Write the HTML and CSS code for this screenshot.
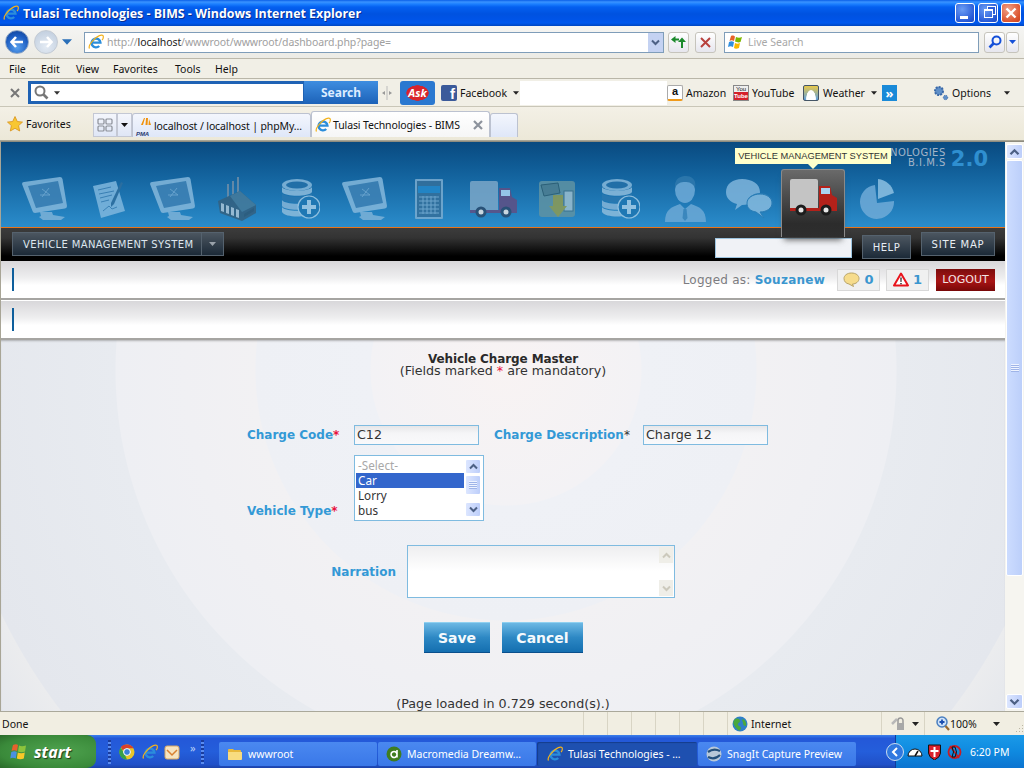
FILE: index.html
```html
<!DOCTYPE html>
<html lang="en">
<head>
  <meta charset="UTF-8" />
  <title>Tulasi Technologies - BIMS - Windows Internet Explorer</title>
  <link rel="stylesheet" href="styles.css">
</head>
<body>
  <svg class="sprite" width="0" height="0">
    <symbol id="ie" viewBox="0 0 16 16">
      <path d="M3.6 8.6h8.8a4.4 4.4 0 1 0-1.2 3.4" fill="none" stroke="#2b8ddb" stroke-width="2.4"/>
      <path d="M1.5 14.5C-.5 11 8 2 13.5 1.2c2.4-.3 2.3 2.6.6 5" fill="none" stroke="#f3b21c" stroke-width="1.2"/>
    </symbol>
    <symbol id="chev-up" viewBox="0 0 9 7"><path d="M1 5.5 4.5 2 8 5.5" fill="none" stroke="currentColor" stroke-width="2"/></symbol>
    <symbol id="chev-down" viewBox="0 0 9 7"><path d="M1 1.5 4.5 5 8 1.5" fill="none" stroke="currentColor" stroke-width="2"/></symbol>
    <symbol id="caret" viewBox="0 0 7 4"><path d="M0 0h7L3.5 4z" fill="currentColor"/></symbol>
    <symbol id="monitor" viewBox="0 0 46 44">
      <path d="M18 35h12l1 3 12 2-4 3H21l-4-3 2-1z" fill="#7db2d8"/>
      <path d="M2 5 38 0q2 0 2.500 2L45 29q0 2-2 2.500L13 36q-2 0-2.500-2L0 7q0-2 2-2z" fill="#85b8dc"/>
      <path d="M6 9 36 4l5 22-27 5z" fill="#3f82b5"/>
      <path d="M20 12l8 6M27 11l-7 9M18 18h10" stroke="#7db2d8" stroke-width=".8" fill="none"/>
    </symbol>
    <symbol id="note" viewBox="0 0 32 37">
      <path d="M0 5 23 0l9 30-24 7z" fill="#7fb7de"/>
      <path d="M5 9l13-3M6 13l15-3M7 17l12-3M8 21l8-2M10 30l6-5 3 3 5-2" stroke="#3f82b5" stroke-width="1" fill="none"/>
      <path d="M28 1l2 1-9 21-3 3 0-4z" fill="#2f6f9f"/>
    </symbol>
    <symbol id="factory" viewBox="0 0 38 44">
      <path d="M9 20V7h2v13zM14 18V4h2v14zM19 16V0h2v16z" fill="#6f8ea8"/>
      <path d="M0 24 22 14l16 14v8L24 44 2 36z" fill="#34607f"/>
      <path d="M12 19 22 14l16 14-14 7z" fill="#457a9a"/>
      <path d="M3 26v8l3 1v-8zM8 28v8l3 1v-8zM13 30v8l3 1v-8zM18 32v8l3 1v-8z" fill="#a9c3d6"/>
      <path d="M26 37l10-6v3l-10 6z" fill="#2e5876"/>
    </symbol>
    <symbol id="db" viewBox="0 0 38 40">
      <ellipse cx="15" cy="6" rx="15" ry="6" fill="#86b8db"/>
      <ellipse cx="15" cy="6" rx="11" ry="3.500" fill="#2470a8"/>
      <path d="M0 8c3 5 27 5 30 0v5c-3 5-27 5-30 0z" fill="#8dbcdc"/>
      <path d="M0 14c3 5 27 5 30 0v6c-3 5-27 5-30 0z" fill="#2a78b0"/>
      <path d="M0 21c3 5 27 5 30 0v6c-3 5-27 5-30 0z" fill="#84b5d8"/>
      <path d="M0 28c3 5 27 5 30 0v5c-3 6-27 6-30 0z" fill="#8dbcdc"/>
      <circle cx="27" cy="28" r="11" fill="#1f77b3" stroke="#a2cbe6" stroke-width="1.200"/>
      <path d="M25 21h4v5h5v4h-5v5h-4v-5h-5v-4h5z" fill="#a5cde8"/>
    </symbol>
    <symbol id="calc" viewBox="0 0 28 40">
      <rect width="28" height="40" rx="1" fill="#7aacd0"/>
      <rect x="2" y="2" width="24" height="36" fill="#35709b"/>
      <rect x="3" y="7" width="22" height="7" fill="#2488c9"/>
      <path d="M4 18h20M4 22h20M4 26h20M4 30h20M4 34h20M8 17v18M12 17v18M16 17v18M20 17v18" stroke="#7aacd0" stroke-width="1" fill="none"/>
    </symbol>
    <symbol id="truck" viewBox="0 0 47 37">
      <rect y="0" width="28" height="31" rx="2" fill="currentColor"/>
      <path d="M29 7h11l2 9 5 3v10H29z" fill="var(--cab)"/>
      <rect x="31" y="9" width="9" height="6" fill="#a9d4f2"/>
      <path d="M0 29h47v3H0z" fill="var(--cab)"/>
      <circle cx="11" cy="31" r="5.500" fill="var(--tyre)"/><circle cx="11" cy="31" r="2.500" fill="#e6e6e6"/>
      <circle cx="36" cy="31" r="5.500" fill="var(--tyre)"/><circle cx="36" cy="31" r="2.500" fill="#e6e6e6"/>
    </symbol>
    <symbol id="box" viewBox="0 0 36 37">
      <rect width="36" height="36" rx="3" fill="#5f93a3"/>
      <path d="M2 4 19 2l2 10-16 3z" fill="#4f7f90" stroke="#2e5e70"/>
      <rect x="25" y="10" width="9" height="20" fill="#9cbfd0" stroke="#3f7088"/>
      <path d="M14 14h10v11h4l-9 11-9-11h4z" fill="#8f9c54"/>
    </symbol>
    <symbol id="person" viewBox="0 0 41 46">
      <path d="M0 46c0-12 6-15 15-18l5 5 6-5c9 3 15 6 15 18z" fill="#6ca9d6"/>
      <ellipse cx="20" cy="14" rx="10" ry="13" fill="#6fabd8"/>
      <path d="M10 12C9 2 16 0 21 0s11 3 9 12c-2-5-6-6-10-6s-8 1-10 6z" fill="#2f79ae"/>
      <path d="M18.500 33h3l1 9-2.500 3-2.500-3z" fill="#3f88bd"/>
    </symbol>
    <symbol id="chat" viewBox="0 0 47 40">
      <path d="M16 0c10 0 18 5 18 13 0 7-9 13-18 13l-7 5 2-6C4 23 0 19 0 13 0 5 7 0 16 0z" fill="#7fb5dc"/>
      <ellipse cx="34" cy="24" rx="13" ry="10" fill="#2a7db6"/>
      <path d="M34 15c7 0 12 4 12 9s-5 9-12 9l4 6-8-6c-6-1-9-4-9-9s6-9 13-9z" fill="#86bbdf" stroke="#2a7db6"/>
    </symbol>
    <symbol id="pie" viewBox="0 0 38 41">
      <path d="M17 6A17 17 0 1 0 36 22L19 24z" fill="#6fabd8"/>
      <path d="M20 0c8 1 14 6 16 14L20 20z" fill="#8cc0e2"/>
    </symbol>
    <symbol id="shield-alert" viewBox="0 0 16 15">
      <path d="M8 1.500 15 13.500H1z" fill="#fff" stroke="#e8141c" stroke-width="2" stroke-linejoin="round"/>
      <path d="M7.300 5.500h1.400l-.2 4.500h-1zM7.300 11h1.400v1.300H7.300z" fill="#222"/>
    </symbol>
  </svg>

  <div class="window">
    <header class="titlebar">
      <svg class="icon-16 title-ie"><use href="#ie"/></svg>
      <span class="title-text">Tulasi Technologies - BIMS - Windows Internet Explorer</span>
      <div class="win-btns">
        <span class="win-btn"><i class="glyph-min"></i></span>
        <span class="win-btn"><i class="glyph-max"></i></span>
        <span class="win-btn win-close">
          <svg width="12" height="12" viewBox="0 0 12 12"><path d="M1.500 1.500l9 9M10.500 1.500l-9 9" stroke="#fff" stroke-width="2.400"/></svg>
        </span>
      </div>
    </header>

    <div class="addressbar">
      <div class="nav-pill">
        <span class="nav-round nav-back">
          <svg width="14" height="12" viewBox="0 0 14 12"><path d="M6 1 1.500 6 6 11M2 6h11" fill="none" stroke="#fff" stroke-width="2.600"/></svg>
        </span>
        <span class="nav-round nav-fwd">
          <svg width="14" height="12" viewBox="0 0 14 12"><path d="M8 1l4.500 5L8 11M12 6H1" fill="none" stroke="#fff" stroke-width="2.600"/></svg>
        </span>
        <svg class="nav-caret" width="10" height="6"><use href="#caret"/></svg>
      </div>
      <div class="addr-box">
        <svg class="icon-16"><use href="#ie"/></svg>
        <span class="addr-url">http://<b>localhost</b>/wwwroot/wwwroot/dashboard.php?page=</span>
        <span class="addr-drop"><svg width="9" height="7"><use href="#chev-down"/></svg></span>
      </div>
      <span class="small-btn btn-refresh">
        <svg width="15" height="14" viewBox="0 0 15 14"><path d="M8 4.500H3M11 13V6" stroke="#1c8a2c" stroke-width="2" fill="none"/><path d="M4.500 1 0 4.500 4.500 8zM7 7l4-4.500L15 7z" fill="#1c8a2c"/></svg>
      </span>
      <span class="small-btn btn-stop">
        <svg width="11" height="11" viewBox="0 0 11 11"><path d="M1 1l9 9M10 1l-9 9" stroke="#b8413d" stroke-width="2"/></svg>
      </span>
      <div class="live-box">
        <svg width="16" height="15" viewBox="0 0 16 15">
          <path d="M3 1c2-1 3 0 4 .500L6 6C4 5 3 5 1.500 6z" fill="#e8622a"/>
          <path d="M8 2c2 1 4 1 6 0l-1.500 5c-2 1-4 0-5.500-.500z" fill="#7fb800"/>
          <path d="M1 7c2-1 3-1 5 0l-1 5c-2-1-3-1-5 0z" fill="#2f8fe0"/>
          <path d="M7 8c2 1 3 1 5 0l-1 5c-2 1-4 1-5 0z" fill="#f8b800"/>
        </svg>
        <span>Live Search</span>
      </div>
      <span class="small-btn btn-go">
        <svg width="14" height="14" viewBox="0 0 14 14"><circle cx="8.500" cy="5.500" r="4" fill="none" stroke="#1550d8" stroke-width="2"/><path d="M5.500 8.500 1.500 12.500" stroke="#1550d8" stroke-width="2.600"/></svg>
      </span>
      <span class="small-btn btn-godrop"><svg width="7" height="4"><use href="#caret"/></svg></span>
    </div>

    <nav class="menubar">
      <span>File</span><span>Edit</span><span>View</span><span>Favorites</span><span>Tools</span><span>Help</span>
    </nav>

    <div class="toolbar">
      <span class="tb-cell tb-close">
        <svg width="10" height="10" viewBox="0 0 10 10"><path d="M1 1l8 8M9 1 1 9" stroke="#777" stroke-width="2"/></svg>
      </span>
      <div class="ask-box">
        <svg width="15" height="15" viewBox="0 0 15 15"><circle cx="6" cy="6" r="4.500" fill="none" stroke="#777" stroke-width="2"/><path d="M9.500 9.500l4 4" stroke="#777" stroke-width="2.600"/></svg>
        <svg class="ask-caret" width="6" height="4"><use href="#caret"/></svg>
      </div>
      <span class="ask-search">Search</span>
      <span class="tb-cell tb-grip">
        <svg width="10" height="14" viewBox="0 0 10 14"><path d="M5 0v14" stroke="#bbb"/><path d="M3 5v4L0 7zM7 5v4l3-2z" fill="#999"/></svg>
      </span>
      <span class="tb-cell"><span class="ask-logo">Ask</span></span>
      <span class="tb-cell tb-link"><i class="fb-icon">f</i>Facebook<svg class="tb-caret" width="6" height="4"><use href="#caret"/></svg></span>
      <span class="tb-white"></span>
      <span class="tb-cell tb-link"><i class="amazon-icon">a</i>Amazon</span>
      <span class="tb-cell tb-link"><i class="yt-icon">You<b>Tube</b></i>YouTube</span>
      <span class="tb-cell tb-link"><i class="weather-icon"></i>Weather<svg class="tb-caret" width="6" height="4"><use href="#caret"/></svg></span>
      <span class="tb-cell"><i class="more-icon">»</i></span>
      <span class="tb-cell tb-link">
        <svg width="16" height="16" viewBox="0 0 16 16"><circle cx="6" cy="6" r="4" fill="#5f8fc8" stroke="#3a69a8" stroke-width="2" stroke-dasharray="2 1"/><circle cx="12.500" cy="12.500" r="2.200" fill="#5f8fc8" stroke="#3a69a8" stroke-dasharray="1 1"/></svg>
        Options<svg class="options-caret" width="6" height="4"><use href="#caret"/></svg>
      </span>
    </div>

    <div class="tabbar">
      <span class="fav">
        <svg width="16" height="16" viewBox="0 0 16 16"><path d="M8 .500l2.300 5 5.200.600-3.900 3.500 1.100 5.400L8 12.300 3.300 15l1.100-5.400L.500 6.100l5.200-.600z" fill="#f8c732" stroke="#d8921a" stroke-width=".8"/></svg>
        Favorites
      </span>
      <span class="tab-tool tab-grid">
        <svg width="16" height="14" viewBox="0 0 16 14"><g fill="none" stroke="#8b8f98" stroke-width="1.200"><rect x="1" y="1" width="6" height="5" rx="1"/><rect x="9" y="1" width="6" height="5" rx="1"/><rect x="1" y="8" width="6" height="5" rx="1"/><rect x="9" y="8" width="6" height="5" rx="1"/></g></svg>
      </span>
      <span class="tab-tool tab-arrow"><svg width="7" height="4"><use href="#caret"/></svg></span>
      <span class="tab tab-pma">
        <svg width="16" height="16" viewBox="0 0 16 16"><path d="M7 0 4 7h2l2-7zM9 0l-.5 7h2L11 0zM12 1l-.5 6h2.500z" fill="#f0920c"/></svg>
        <span class="pma">PMA</span>
        localhost / localhost | phpMy…
      </span>
      <span class="tab tab-on">
        <svg class="icon-16"><use href="#ie"/></svg>
        Tulasi Technologies - BIMS
        <svg class="tab-x" width="10" height="10" viewBox="0 0 10 10"><path d="M1 1l8 8M9 1 1 9" stroke="#8c929c" stroke-width="2.200"/></svg>
      </span>
      <span class="tab tab-new"></span>
    </div>

    <div class="viewport">
      <div class="page">
        <div class="head">
          <div class="nav-icons">
            <span class="nav-cell"><svg class="i-monitor"><use href="#monitor"/></svg></span>
            <span class="nav-cell"><svg class="i-note"><use href="#note"/></svg></span>
            <span class="nav-cell"><svg class="i-monitor"><use href="#monitor"/></svg></span>
            <span class="nav-cell"><svg class="i-factory"><use href="#factory"/></svg></span>
            <span class="nav-cell"><svg class="i-db"><use href="#db"/></svg></span>
            <span class="nav-cell"><svg class="i-monitor"><use href="#monitor"/></svg></span>
            <span class="nav-cell"><svg class="i-calc"><use href="#calc"/></svg></span>
            <span class="nav-cell"><svg class="i-truck truck-dim"><use href="#truck"/></svg></span>
            <span class="nav-cell"><svg class="i-box"><use href="#box"/></svg></span>
            <span class="nav-cell"><svg class="i-db"><use href="#db"/></svg></span>
            <span class="nav-cell"><svg class="i-person"><use href="#person"/></svg></span>
            <span class="nav-cell"><svg class="i-chat"><use href="#chat"/></svg></span>
            <span class="nav-cell nav-active"><svg class="i-truck truck-on"><use href="#truck"/></svg></span>
            <span class="nav-cell"><svg class="i-pie"><use href="#pie"/></svg></span>
          </div>
          <div class="brand">
            <div class="brand-text">NOLOGIES<br>B.I.M.S</div>
            <div class="brand-ver">2.0</div>
          </div>
          <div class="tooltip">VEHICLE MANAGEMENT SYSTEM</div>
        </div>

        <div class="darkbar">
          <div class="module-select">
            <span class="module-name">VEHICLE MANAGEMENT SYSTEM</span>
            <span class="module-arrow"><svg width="7" height="4"><use href="#caret"/></svg></span>
          </div>
          <input class="quick-search" type="text">
          <span class="dark-btn dark-help">HELP</span>
          <span class="dark-btn dark-map">SITE MAP</span>
        </div>

        <div class="strip strip-user">
          <i class="strip-mark"></i>
          <div class="user-info">
            <span class="logged">Logged as: <b>Souzanew</b></span>
            <span class="count-box count-msg">
              <svg width="17" height="15" viewBox="0 0 17 15"><path d="M8.500 1C13 1 16 3.500 16 6.500S13 12 9.500 12l1 2.500L6 12C3 11.500 1 9.500 1 6.500S4 1 8.500 1z" fill="#f6dc8c" stroke="#b8a468"/></svg>
              0
            </span>
            <span class="count-box count-alert"><svg width="16" height="15"><use href="#shield-alert"/></svg>1</span>
            <span class="logout">LOGOUT</span>
          </div>
        </div>
        <div class="strip"><i class="strip-mark"></i></div>

        <main class="main">
          <h1 class="form-title">Vehicle Charge Master</h1>
          <p class="form-note">(Fields marked <span class="req">*</span> are mandatory)</p>

          <form class="form">
            <div class="row row-code">
              <label class="lbl lbl-code">Charge Code<span class="req">*</span></label>
              <input class="field" type="text" value="C12">
              <label class="lbl lbl-desc">Charge Description<span class="req">*</span></label>
              <input class="field" type="text" value="Charge 12">
            </div>
            <div class="row row-type">
              <label class="lbl lbl-code">Vehicle Type<span class="req">*</span></label>
              <div class="listbox">
                <ul class="list-items">
                  <li class="opt-muted">-Select-</li>
                  <li class="opt-on">Car</li>
                  <li>Lorry</li>
                  <li>bus</li>
                </ul>
                <div class="list-scroll">
                  <span class="sb-btn"><svg width="9" height="7"><use href="#chev-up"/></svg></span>
                  <span class="sb-btn list-thumb"><i class="sb-grip"></i></span>
                  <span class="sb-fill"></span>
                  <span class="sb-btn"><svg width="9" height="7"><use href="#chev-down"/></svg></span>
                </div>
              </div>
            </div>
            <div class="row row-narr">
              <label class="lbl lbl-narr">Narration</label>
              <div class="narr">
                <textarea class="narr-text"></textarea>
                <div class="narr-scroll">
                  <span class="sb-off"><svg width="9" height="7"><use href="#chev-up"/></svg></span>
                  <span class="sb-off"><svg width="9" height="7"><use href="#chev-down"/></svg></span>
                </div>
              </div>
            </div>
            <div class="row row-btns">
              <button class="btn btn-save" type="button">Save</button>
              <button class="btn btn-cancel" type="button">Cancel</button>
            </div>
          </form>
          <p class="loaded">(Page loaded in 0.729 second(s).)</p>
        </main>
      </div>

      <div class="page-scroll">
        <span class="ps-btn"><svg width="11" height="8"><use href="#chev-up"/></svg></span>
        <span class="ps-thumb"><i class="sb-grip"></i></span>
        <span class="ps-track"></span>
        <span class="ps-btn"><svg width="11" height="8"><use href="#chev-down"/></svg></span>
      </div>
    </div>

    <footer class="statusbar">
      <span class="st-done">Done</span>
      <span class="st-sep"></span><span class="st-sep"></span><span class="st-sep"></span><span class="st-sep"></span><span class="st-sep"></span><span class="st-sep"></span>
      <span class="st-zone">
        <svg width="16" height="16" viewBox="0 0 16 16"><circle cx="8" cy="8" r="7.500" fill="#2f7fc8"/><path d="M3 3c3-1 5 0 5 2S5 7 6 9s3 1 3 3-2 3-3 2-3-3-4-5-1-4 1-6zM11 3c2 1 4 4 3 7-2 0-3-1-3-3s-2-3 0-4z" fill="#4aa83c"/></svg>
        Internet
      </span>
      <span class="st-lock">
        <svg width="16" height="15" viewBox="0 0 16 15"><path d="M2 8l5-5" stroke="#b8b8b8" stroke-width="2.500"/><path d="M8 7V4.500a2.500 2.500 0 0 1 5 0V7" fill="none" stroke="#999" stroke-width="1.500"/><rect x="7" y="7" width="7" height="7" fill="#a8a8a8"/></svg>
        <svg class="st-caret" width="7" height="4"><use href="#caret"/></svg>
      </span>
      <span class="st-zoom">
        <svg width="14" height="15" viewBox="0 0 14 15"><circle cx="6" cy="6" r="5" fill="#cfe2f8" stroke="#4a7fc0" stroke-width="1.500"/><path d="M3.500 6h5M6 3.500v5" stroke="#1c4fb0" stroke-width="1.800"/><path d="M9.500 10l3.500 4" stroke="#9a6a30" stroke-width="2.200"/></svg>
        100%
        <svg class="st-zoom-caret" width="7" height="4"><use href="#caret"/></svg>
      </span>
      <svg class="st-resize" width="10" height="10" viewBox="0 0 10 10"><path d="M8 1h1v1H8zM5 4h1v1H5zM8 4h1v1H8zM2 7h1v1H2zM5 7h1v1H5zM8 7h1v1H8z" fill="#bbb6a4"/></svg>
    </footer>

    <div class="taskbar">
      <span class="start">
        <svg width="18" height="18" viewBox="0 0 18 18">
          <path d="M3 2c2-1 4-1 5 0L7 8C5 7 3 7 1.500 8z" fill="#e8602c"/>
          <path d="M9 2.500c2 1 4 1 7 0l-1 6c-2 1-5 1-7 0z" fill="#8cc43c"/>
          <path d="M1.300 9c2-1 4-1 5.500 0l-1 6.500c-2-1-4-1-5.500 0z" fill="#4a90e0"/>
          <path d="M7.800 9.500c2 1 5 1 7 0l-1 6c-2 1-5 1-7 0z" fill="#f8c828"/>
        </svg>
        start
      </span>
      <div class="quick">
        <i class="grip"></i>
        <svg class="ql-chrome" width="16" height="16" viewBox="0 0 16 16"><circle cx="8" cy="8" r="7.500" fill="#e8c628"/><path d="M8 .500a7.500 7.500 0 0 1 6.500 3.750H8L3.200 6 2 2.800A7.500 7.500 0 0 1 8 .500z" fill="#d8402c"/><path d="M1.800 3.500 5.500 10l2.500 5.500A7.500 7.500 0 0 1 1.800 3.500z" fill="#38a048"/><circle cx="8" cy="8" r="3.400" fill="#3a80d8" stroke="#fff"/></svg>
        <svg class="ql-ie" width="16" height="16"><use href="#ie"/></svg>
        <svg class="ql-outlook" width="16" height="16" viewBox="0 0 16 16"><rect x="1" y="2" width="14" height="13" rx="2" fill="#f6e4c0" stroke="#d8a860"/><path d="M3 6l5 5 5-5" fill="none" stroke="#d88030" stroke-width="1.500"/></svg>
        <span class="ql-more">»</span>
        <i class="grip"></i>
      </div>
      <span class="task task-first">
        <svg width="16" height="14" viewBox="0 0 16 14"><path d="M1 3q0-1 1-1h4l1 1h6q1 0 1 1v8q0 1-1 1H2q-1 0-1-1z" fill="#e8b93c"/><path d="M1 5h14v7q0 1-1 1H2q-1 0-1-1z" fill="#f8dc80"/></svg>
        wwwroot
      </span>
      <span class="task">
        <svg width="16" height="16" viewBox="0 0 16 16"><circle cx="8" cy="8" r="7.500" fill="#3f7d20"/><path d="M11 4v7.500M11 8a3 3 0 1 0 0 1" fill="none" stroke="#fff" stroke-width="1.600"/></svg>
        Macromedia Dreamw…
      </span>
      <span class="task task-on">
        <svg class="icon-16"><use href="#ie"/></svg>
        Tulasi Technologies - …
      </span>
      <span class="task">
        <svg width="16" height="16" viewBox="0 0 16 16"><circle cx="8" cy="8" r="7.500" fill="#b8c8d8"/><path d="M2 6c4-3 8-3 12-1M2 11c4 2 8 2 12-2" fill="none" stroke="#24507c" stroke-width="2.200"/></svg>
        SnagIt Capture Preview
      </span>
      <div class="tray">
        <span class="tray-arrow"><svg width="8" height="10" viewBox="0 0 8 10"><path d="M6 1 2 5l4 4" fill="none" stroke="#fff" stroke-width="2"/></svg></span>
        <svg class="tray-gauge" width="16" height="10" viewBox="0 0 16 10"><path d="M1 9a7 7 0 0 1 14 0z" fill="#fff" stroke="#111"/><path d="M8 9l3-5" stroke="#111" stroke-width="1.500"/></svg>
        <svg class="tray-shield" width="13" height="16" viewBox="0 0 13 16"><path d="M.500 1h12v8q0 4-6 7-6-3-6-7z" fill="#d8202c" stroke="#111"/><path d="M5.500 3h2v3h3v2h-3v5h-2V8h-3V6h3z" fill="#fff"/></svg>
        <svg class="tray-ring" width="15" height="16" viewBox="0 0 15 16"><circle cx="7.500" cy="8" r="6" fill="none" stroke="#c81c24" stroke-width="1.800"/><path d="M3 2l9 12" stroke="#c81c24" stroke-width="1.600"/><path d="M5 3h3q3 5 0 10H5q3-5 0-10z" fill="none" stroke="#111"/></svg>
        <span class="clock">6:20 PM</span>
      </div>
    </div>
  </div>
</body>
</html>
```

FILE: styles.css
```css
* { box-sizing: border-box; }

body {
  margin: 0;
  width: 1024px;
  height: 768px;
  overflow: hidden;
  font-family: "Noto Sans", sans-serif;
  font-size: 10.5px;
  color: #111;
}

i { font-style: normal; }

.sprite { position: absolute; }

.icon-16 { width: 16px; height: 16px; flex: none; }

.window {
  display: flex;
  flex-direction: column;
  width: 1024px;
  height: 768px;
}

/* title bar */
.titlebar {
  flex: none;
  display: flex;
  align-items: center;
  height: 26px;
  padding: 0 3px 0 3px;
  background: linear-gradient(#0a5fe8 0, #3a93ff 2px, #1c80ff 4px, #0460f0 7px, #0052e0 14px, #0054e8 20px, #0058ee 23px, #0046c0 26px);
}

.title-ie { margin-right: 4px; }

.title-text {
  color: #fff;
  font-family: "Open Sans", sans-serif;
  font-weight: 700;
  font-size: 12.4px;
  text-shadow: 1px 1px 0 #0a2f90;
}

.win-btns {
  display: flex;
  gap: 3px;
  margin-left: auto;
}

.win-btn {
  display: flex;
  align-items: center;
  justify-content: center;
  width: 20px;
  height: 20px;
  border: 1px solid #fff;
  border-radius: 3px;
  background: radial-gradient(circle at 35% 30%, #6a9cf4, #2a5cd8 70%, #1c48c0);
}

.win-close { background: radial-gradient(circle at 35% 30%, #f0a088, #dc5530 70%, #c84020); }

.glyph-min { width: 8px; height: 3px; margin-top: 8px; margin-right: 3px; background: #fff; }

.glyph-max {
  width: 9px;
  height: 9px;
  border: 1px solid #fff;
  border-top-width: 2px;
  box-shadow: 3px -3px 0 -1px #2a5cd8, 3px -3px 0 0 #fff;
}

/* address row */
.addressbar {
  flex: none;
  display: flex;
  align-items: center;
  height: 33px;
  background: linear-gradient(#f5f5f3, #ecebe5);
  border-bottom: 1px solid #bdb9ab;
}

.nav-pill {
  display: flex;
  align-items: center;
  width: 84px;
  padding-left: 5px;
}

.nav-round {
  display: flex;
  align-items: center;
  justify-content: center;
  width: 24px;
  height: 24px;
  border-radius: 50%;
}

.nav-back {
  background: radial-gradient(circle at 50% 75%, #58a0ee, #1c5cc0 60%, #123f90);
  border: 1px solid #8fa6c4;
}

.nav-fwd {
  margin-left: 5px;
  background: radial-gradient(circle at 50% 70%, #e4ebf4, #bccadb);
  border: 1px solid #c4cbd4;
}

.nav-caret { margin-left: 4px; color: #2a6fb8; }

.addr-box {
  display: flex;
  align-items: center;
  width: 580px;
  height: 21px;
  border: 1px solid #7f9db9;
  background: #fff;
  padding-left: 3px;
}

.addr-url {
  margin-left: 3px;
  color: #a0a0a0;
  letter-spacing: -.09px;
}

.addr-url b { color: #222; font-weight: 400; }

.addr-drop {
  display: flex;
  align-items: center;
  justify-content: center;
  margin-left: auto;
  width: 15px;
  height: 19px;
  background: #c4d2f2;
  color: #4d6185;
}

.small-btn {
  display: flex;
  align-items: center;
  justify-content: center;
  height: 21px;
  border: 1px solid #c6c4bc;
  border-radius: 3px;
  background: linear-gradient(#fff, #e6e6ee);
}

.btn-refresh { width: 21px; margin-left: 4px; }
.btn-stop { width: 21px; margin-left: 6px; }
.btn-go { width: 21px; margin-left: 5px; }
.btn-godrop { width: 13px; margin-left: 1px; color: #1550d8; }

.live-box {
  display: flex;
  align-items: center;
  gap: 4px;
  width: 255px;
  height: 21px;
  margin-left: 8px;
  padding-left: 3px;
  border: 1px solid #7f9db9;
  background: #fff;
  color: #a8a8a8;
}

/* menu row */
.menubar {
  flex: none;
  display: grid;
  grid-template-columns: 32px 35px 37px 62px 40px 40px;
  align-items: center;
  height: 20px;
  padding-left: 9px;
  background: #f1efe6;
  border-bottom: 1px solid #b9b6a8;
}

/* search and links row */
.toolbar {
  flex: none;
  display: grid;
  grid-template-columns: 28px 276px 74px 22px 41px 79px 147px 66px 70px 79px 51px 91px;
  align-items: center;
  height: 28px;
  background: #f1efe6;
  border-bottom: 1px solid #c9c6b8;
}

.tb-cell { display: flex; align-items: center; height: 100%; }

.tb-close { padding-left: 10px; }
.tb-grip { padding-left: 4px; }
.tb-link { gap: 3px; white-space: nowrap; }

.ask-box {
  display: flex;
  align-items: center;
  height: 23px;
  padding-left: 3px;
  border: 3px solid #1f62b4;
  border-right-width: 1px;
  background: #fff;
}

.ask-caret { margin-left: 5px; color: #333; }

.ask-search {
  display: flex;
  align-items: center;
  justify-content: center;
  height: 23px;
  background: linear-gradient(#3e8de0, #1c62b8);
  color: #dcecff;
  font-weight: 700;
  font-size: 12px;
}

.ask-logo {
  display: flex;
  align-items: center;
  justify-content: center;
  width: 35px;
  height: 24px;
  border-radius: 3px;
  background: radial-gradient(ellipse at center, #d8242c 0 44%, #2a78d0 46%);
  color: #fff;
  font-weight: 700;
  font-style: italic;
  font-size: 11px;
}

.fb-icon {
  display: flex;
  align-items: flex-end;
  justify-content: flex-end;
  width: 16px;
  height: 16px;
  padding-right: 2px;
  border-radius: 2px;
  background: #3b5a9a;
  color: #fff;
  font-family: "Liberation Sans", sans-serif;
  font-weight: 700;
  font-size: 15px;
  line-height: 15px;
}

.tb-caret { margin-left: 3px; color: #222; }

.tb-white { height: 24px; background: #fff; }

.amazon-icon {
  display: flex;
  align-items: flex-start;
  justify-content: center;
  width: 16px;
  height: 16px;
  border: 1px solid #aaa;
  border-radius: 2px;
  border-bottom: 2px solid #f09a1a;
  background: #fff;
  font-family: "Liberation Sans", sans-serif;
  font-weight: 700;
  font-size: 11px;
  line-height: 11px;
}

.yt-icon {
  display: block;
  width: 16px;
  height: 16px;
  border: 1px solid #888;
  background: #eee;
  font-family: "Liberation Sans", sans-serif;
  font-size: 6px;
  line-height: 6px;
  text-align: center;
}

.yt-icon b { display: block; background: #d4202a; color: #fff; line-height: 8px; }

.weather-icon {
  display: block;
  width: 16px;
  height: 16px;
  margin-right: 1px;
  border: 1px solid #456;
  border-radius: 2px;
  background: radial-gradient(ellipse at 50% 90%, #fff 0 45%, transparent 50%), linear-gradient(#e8c84a, #5ea0e0);
}

.more-icon {
  display: flex;
  align-items: center;
  justify-content: center;
  width: 15px;
  height: 16px;
  background: #1a8ad8;
  color: #fff;
  font-weight: 700;
  font-size: 13px;
  line-height: 14px;
}

.options-caret { margin-left: 10px; color: #222; }

/* tab row */
.tabbar {
  flex: none;
  display: grid;
  grid-template-columns: 93px 24px 15px 179px 179px 28px;
  align-items: end;
  height: 34px;
  background: linear-gradient(#f3f0e6, #ece8d8);
  border-bottom: 1px solid #a8a596;
}

.fav {
  display: flex;
  align-items: center;
  gap: 3px;
  align-self: center;
  padding-left: 7px;
}

.tab-tool {
  display: flex;
  align-items: center;
  justify-content: center;
  height: 24px;
  margin-bottom: 3px;
  border: 1px solid #c4c8d4;
  background: linear-gradient(#f4f6fc, #dfe6f6);
}

.tab {
  position: relative;
  display: flex;
  align-items: center;
  gap: 3px;
  height: 24px;
  margin-bottom: 3px;
  padding-left: 4px;
  border: 1px solid #bcc2d0;
  border-bottom: 0;
  border-radius: 3px 3px 0 0;
  background: linear-gradient(#f3f6fd, #dfe7f8);
  letter-spacing: -.12px;
  white-space: nowrap;
}

.tab-pma { gap: 1px; }

.pma {
  position: absolute;
  left: 3px;
  bottom: 0;
  font-family: "Liberation Sans", sans-serif;
  font-weight: 700;
  font-style: italic;
  font-size: 6px;
  color: #2a3a70;
}

.tab-on {
  height: 26px;
  gap: 2px;
  padding-left: 3px;
  background: linear-gradient(#fff, #f6f6f6);
}

.tab-x { margin-left: auto; margin-right: 6px; }

.tab-new { padding: 0; }

/* the page inside the browser */
.viewport {
  flex: none;
  display: flex;
  height: 570px;
  border-left: 1px solid #a8a596;
  border-top: 1px solid #8e8c80;
}

.page {
  display: flex;
  flex-direction: column;
  width: 1004px;
  height: 100%;
  overflow: hidden;
}

.head {
  position: relative;
  flex: none;
  display: flex;
  align-items: flex-end;
  height: 86px;
  padding-left: 12px;
  background: linear-gradient(#094a80 0, #105d97 30%, #2a8ccb 100%);
  border-bottom: 1px solid #e8741a;
}

/* the row of cells runs on under the brand text */
.nav-icons {
  display: flex;
  align-items: flex-end;
  flex: none;
  width: 860px;
  height: 100%;
}

.nav-cell {
  flex: none;
  display: flex;
  justify-content: center;
  align-items: center;
  width: 64px;
  height: 58px;
  padding-top: 2px;
}

.nav-cell svg { opacity: .85; }
.nav-active svg { opacity: 1; }

.i-monitor { width: 46px; height: 44px; }
.i-note { width: 32px; height: 37px; }
.i-factory { width: 38px; height: 44px; }
.i-db { width: 38px; height: 40px; }
.i-calc { width: 28px; height: 40px; }
.i-truck { width: 47px; height: 37px; }
.i-box { width: 36px; height: 37px; }
.i-person { width: 41px; height: 46px; }
.i-chat { width: 47px; height: 40px; }
.i-pie { width: 38px; height: 41px; }

.truck-dim {
  color: #7ba7c8;
  --cab: #5f4f84;
  --tyre: #2a4a6c;
}

.truck-on {
  color: #c4c4c4;
  --cab: #b3211a;
  --tyre: #1c1c1c;
}

.nav-active {
  position: relative;
  z-index: 2;
  align-self: flex-end;
  height: 68px;
  margin-bottom: -10px;
  padding: 0 0 12px;
  border: 1px solid #8a8a8a;
  border-bottom: 0;
  border-radius: 3px 3px 0 0;
  background: linear-gradient(#6a6a6a, #2c2c2c 80%, #2e2e2e);
  box-shadow: 0 6px 6px -3px rgba(70, 70, 70, .8);
}

.brand {
  display: flex;
  align-items: flex-start;
  gap: 5px;
  margin-left: auto;
  margin-right: 17px;
  align-self: flex-start;
  padding-top: 6px;
}

.brand-text {
  color: #a3b4c8;
  font-family: "DejaVu Sans", sans-serif;
  font-size: 10px;
  line-height: 10px;
  letter-spacing: .5px;
  text-align: right;
  white-space: nowrap;
}

.brand-ver {
  color: #2f8fd0;
  font-family: "DejaVu Sans", sans-serif;
  font-weight: 700;
  font-size: 21px;
  line-height: 22px;
}

.tooltip {
  position: absolute;
  z-index: 3;
  top: 6px;
  left: 734px;
  width: 156px;
  height: 16px;
  background: #ffffcc;
  color: #333;
  font-family: "Liberation Sans", sans-serif;
  font-size: 9.3px;
  line-height: 16px;
  text-align: center;
  white-space: nowrap;
}

.tooltip::after {
  content: "";
  position: absolute;
  left: 73px;
  top: 16px;
  border: 5px solid transparent;
  border-top-color: #ffffcc;
  border-bottom: 0;
}

.darkbar {
  flex: none;
  display: flex;
  align-items: flex-start;
  height: 33px;
  padding: 4px 9px 0 11px;
  background: linear-gradient(#3c3c3c, #333 30%, #000 85%);
}

.module-select {
  display: flex;
  width: 212px;
  height: 24px;
  border: 1px solid #55626e;
  background: linear-gradient(#4c5660, #1c2a38);
  color: #dde6ee;
  font-family: "DejaVu Sans", sans-serif;
  font-size: 10px;
  line-height: 23px;
}

.module-name { width: 189px; padding-left: 10px; border-right: 1px solid #55626e; letter-spacing: .38px; white-space: nowrap; }

.module-arrow {
  display: flex;
  align-items: center;
  justify-content: center;
  flex: 1;
  color: #9aa2aa;
}

.quick-search {
  width: 137px;
  height: 20px;
  margin: 6px 0 0 491px;
  border: 1px solid #9cc4e0;
  background: #f0f2f6;
}

.dark-btn {
  height: 24px;
  border: 1px solid #55626e;
  background: linear-gradient(#4c5660, #1c2a38);
  color: #e8eef4;
  font-family: "DejaVu Sans", sans-serif;
  font-size: 10px;
  line-height: 23px;
  letter-spacing: .5px;
  text-align: center;
}

.dark-help { width: 49px; margin: 3px 0 0 10px; }
.dark-map { width: 74px; margin-left: 10px; letter-spacing: .8px; }

.strip {
  flex: none;
  display: flex;
  align-items: center;
  height: 39px;
  padding: 0 10px 0 11px;
  background: linear-gradient(#d8d7da, #eeeeef 45%, #fff 65%);
  border-bottom: 2px solid #a6a5a2;
}

.strip + .strip { height: 40px; border-top: 1px solid #fff; }

.strip-mark { width: 2px; height: 23px; background: #0e5f9c; }

.user-info {
  display: flex;
  align-items: center;
  margin-left: auto;
  font-family: "DejaVu Sans", sans-serif;
}

.logged { color: #7c7c80; font-size: 12px; margin-right: 12px; letter-spacing: .25px; }
.logged b { color: #3a96cf; }

.count-box {
  display: flex;
  align-items: center;
  justify-content: center;
  gap: 4px;
  width: 43px;
  height: 22px;
  margin-right: 6px;
  border: 1px solid #d8d8d8;
  background: #f0f0f0;
  color: #3a96cf;
  font-weight: 700;
  font-size: 13px;
}

.logout {
  width: 59px;
  height: 22px;
  margin-left: 1px;
  background: linear-gradient(#7c0e0e, #a81414 55%, #780808);
  color: #f2e4e4;
  font-size: 11px;
  line-height: 22px;
  text-align: center;
}

/* form area */
.main {
  flex: 1;
  min-height: 0;
  overflow: hidden;
  font-family: "DejaVu Sans", sans-serif;
  font-size: 12.7px;
  color: #333;
  background: radial-gradient(circle at 505px 30px, #f8f3f3 0, #f3f2f5 135px, #eff1f6 136px, #eef0f5 250px, #f2f1f3 251px, #eeeff3 390px, #e8ebf0 391px, #e4e7ed 560px, #ebecee 561px, #e3e6ec 620px, #dde2e9 800px);
  box-shadow: inset 0 2px 2px -1px rgba(120, 120, 120, .5);
}

.form-title {
  margin: 13px 0 0;
  font-size: 12px;
  line-height: 12px;
  font-weight: 700;
  letter-spacing: -.1px;
  color: #2a2a2a;
  text-align: center;
}

.form-note { margin: 0; line-height: 12px; text-align: center; }

.req { color: #e8103c; }

.form { padding: 47px 0 0 246px; }

.row { display: flex; }

.lbl {
  flex: none;
  color: #3399d6;
  font-weight: 700;
  font-size: 12px;
  white-space: nowrap;
}

.row-code { align-items: center; height: 21px; }

.lbl-code { width: 107px; }
.lbl-desc { width: 149px; margin-left: 15px; }
.lbl-desc .req { color: #333; font-weight: 400; }

.field {
  width: 125px;
  height: 20px;
  padding: 0 2px;
  border: 1px solid #7fbbe0;
  background: linear-gradient(#e6e6e8, #f5f5f7 40%, #f9f9fb);
  color: #333;
  font-family: "DejaVu Sans", sans-serif;
  font-size: 12.7px;
}

.row-type { align-items: flex-end; height: 66px; margin-top: 10px; }
.row-type .lbl { margin-bottom: 3px; }

.listbox {
  display: flex;
  width: 130px;
  height: 66px;
  padding: 2px 1px;
  border: 1px solid #7fbbe0;
  background: #fff;
}

.list-items {
  flex: 1;
  margin: 0;
  padding: 0;
  list-style: none;
  font-family: "Noto Sans", sans-serif;
  font-size: 11.7px;
}

.list-items li { height: 15px; padding-left: 2px; line-height: 15px; }

.opt-muted { color: #a8a8a8; }

.opt-on { background: #3366cc; color: #fff; }

.list-scroll {
  display: flex;
  flex-direction: column;
  width: 18px;
  padding: 1px;
}

.sb-btn {
  display: flex;
  align-items: center;
  justify-content: center;
  flex: none;
  height: 15px;
  border: 1px solid #fff;
  border-radius: 2px;
  background: linear-gradient(90deg, #dce6ff, #bdcefa);
  color: #4d6185;
}

.list-thumb { height: 20px; margin-top: 1px; }

.sb-fill { flex: 1; }

.sb-grip {
  display: block;
  width: 8px;
  height: 8px;
  background: repeating-linear-gradient(#eef3ff 0 1px, #9fb4e8 1px 2px);
}

.row-narr { align-items: center; height: 53px; margin-top: 24px; }

.lbl-narr { width: 149px; text-align: right; margin-right: 11px; padding-top: 1px; }

.narr {
  display: flex;
  width: 268px;
  height: 53px;
  border: 1px solid #7fbbe0;
  background: linear-gradient(#eeeef0, #fff 50%);
}

.narr-text {
  flex: 1;
  border: 0;
  outline: 0;
  resize: none;
  overflow: hidden;
  background: transparent;
}

.narr-scroll {
  display: flex;
  flex-direction: column;
  justify-content: space-between;
  width: 16px;
  padding: 1px;
}

.sb-off {
  display: flex;
  align-items: center;
  justify-content: center;
  height: 16px;
  background: #efeee8;
  color: #ccc9bc;
}

.row-btns { gap: 12px; margin-top: 24px; padding-left: 177px; }

.btn {
  height: 31px;
  padding: 0;
  border: 0;
  border-top: 1px solid #8fd0f0;
  border-bottom: 1px solid #0a4f8c;
  background: linear-gradient(#6cb8e4, #2d88c4 50%, #146fb0);
  color: #f4f9fc;
  font-family: "DejaVu Sans", sans-serif;
  font-weight: 700;
  font-size: 14px;
}

.btn-save { width: 66px; }
.btn-cancel { width: 81px; }

.loaded { margin: 44px 0 0; line-height: 14px; text-align: center; }

/* page scrollbar */
.page-scroll {
  display: flex;
  flex-direction: column;
  flex: 1;
  padding: 2px 1px;
  background: #f6f5f0;
}

.ps-btn {
  display: flex;
  align-items: center;
  justify-content: center;
  flex: none;
  height: 15px;
  border: 1px solid #fff;
  border-radius: 2px;
  background: linear-gradient(90deg, #dce6ff, #bdcefa);
  color: #4d6185;
}

.ps-thumb {
  display: flex;
  align-items: center;
  justify-content: center;
  flex: none;
  height: 416px;
  margin-top: 1px;
  border: 1px solid #fff;
  border-radius: 2px;
  background: linear-gradient(90deg, #ccdcff, #bccffa);
}

.ps-track { flex: 1; }

/* status bar */
.statusbar {
  flex: none;
  display: flex;
  align-items: center;
  height: 24px;
  background: #f1eee2;
  border-top: 1px solid #aaa89a;
}

.st-done { width: 583px; padding-left: 2px; }

.st-sep {
  width: 24px;
  height: 100%;
  border-left: 1px solid #d8d4c4;
}

.st-zone {
  display: flex;
  align-items: center;
  gap: 3px;
  width: 154px;
  height: 100%;
  padding-left: 4px;
  border-left: 1px solid #d8d4c4;
}

.st-lock {
  display: flex;
  align-items: center;
  width: 43px;
  height: 100%;
  padding-left: 8px;
  border-left: 1px solid #d8d4c4;
}

.st-caret { margin-left: 6px; color: #222; }

.st-zoom {
  display: flex;
  align-items: center;
  width: 85px;
  height: 100%;
  padding-left: 11px;
  border-left: 1px solid #d8d4c4;
}

.st-zoom-caret { margin-left: 16px; color: #222; }

.st-resize { margin-left: auto; align-self: flex-end; margin-bottom: 1px; }

/* taskbar */
.taskbar {
  flex: 1;
  display: flex;
  align-items: flex-start;
  background: linear-gradient(#3c80ec 0, #2458d8 10%, #245edb 50%, #2050c8 90%, #1c42a8);
  color: #fff;
}

.start {
  display: flex;
  align-items: center;
  gap: 6px;
  align-self: stretch;
  width: 96px;
  padding-left: 10px;
  border-radius: 0 9px 9px 0;
  background: radial-gradient(ellipse at 60% 50%, #4fa34f, #3a8a3a 70%, #2a6a2a);
  font-family: "Open Sans", sans-serif;
  font-weight: 700;
  font-style: italic;
  font-size: 16px;
  text-shadow: 1px 1px 1px #1c3c1c;
}

.quick {
  display: flex;
  align-items: center;
  align-self: stretch;
  width: 123px;
  padding-left: 12px;
}

.grip {
  width: 3px;
  height: 24px;
  background: repeating-linear-gradient(#1a3c9c 0 2px, #5a8cf0 2px 4px);
}

.ql-chrome { margin-left: 8px; }
.ql-ie { margin-left: 7px; }
.ql-outlook { margin-left: 6px; }
.ql-more { margin: -8px 0 0 10px; color: #b8d0f8; font-size: 11px; width: 11px; }

.task {
  display: flex;
  align-items: center;
  gap: 5px;
  width: 158px;
  height: 24px;
  margin: 7px 1px 0 0;
  padding-left: 8px;
  border-radius: 2px;
  background: linear-gradient(#4a88f0, #3a78e8);
  white-space: nowrap;
}

.task-on { background: #1e50b0; width: 160px; padding-left: 10px; box-shadow: inset 1px 1px 1px #143c8c; }

.tray {
  display: flex;
  align-items: center;
  align-self: stretch;
  width: 129px;
  margin-left: auto;
  border-left: 1px solid #103c9c;
  background: linear-gradient(#1a9ae8, #0f8ae0 50%, #0c74d0);
}

.tray-arrow {
  display: flex;
  align-items: center;
  justify-content: center;
  width: 18px;
  height: 18px;
  margin-left: -10px;
  border: 1px solid #cde;
  border-radius: 50%;
  background: #2f78e0;
}

.tray-gauge { margin-left: 3px; }
.tray-shield { margin-left: 5px; }
.tray-ring { margin-left: 6px; }
.clock { margin-left: 8px; white-space: nowrap; }
```
